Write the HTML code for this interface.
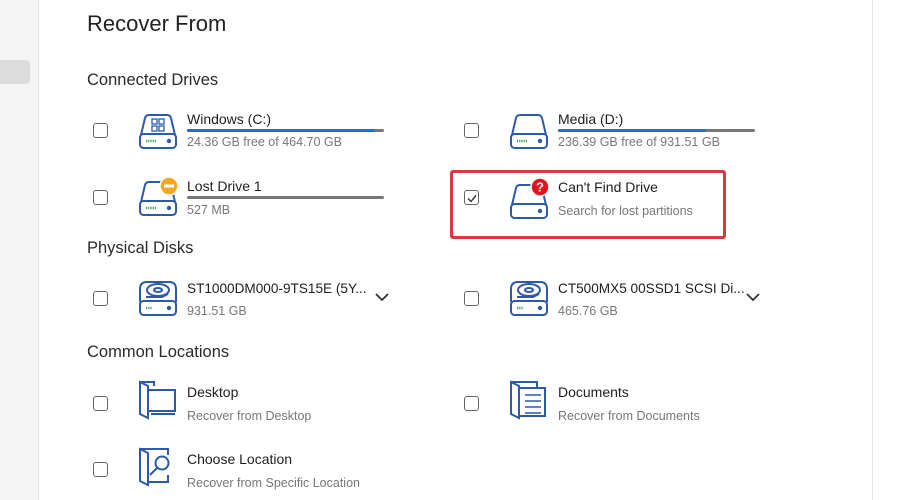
<!DOCTYPE html>
<html><head><meta charset="utf-8"><style>
body{margin:0;width:900px;height:500px;background:#fff;font-family:"Liberation Sans",Arial,sans-serif;position:relative;overflow:hidden;color:#222}
.a{position:absolute;white-space:nowrap}
.side{left:0;top:0;width:38px;height:500px;background:#f5f5f5;border-right:1px solid #e3e3e3}
.pill{left:0;top:60px;width:30px;height:24px;background:#dcdcdc;border-radius:0 4px 4px 0}
.rline{left:872px;top:0;width:1px;height:500px;background:#e6e6e6}
.h1{font-size:22px;color:#222}
.h2{font-size:16.5px;color:#2a2a2a}
.cb{width:13px;height:13px;border:1.5px solid #666;border-radius:3px}
.t{font-size:14px;color:#1e1e1e}
.s{font-size:12.5px;color:#777}
.bar{height:3px;background:#777;border-radius:2px}
.bar i{display:block;height:3px;background:#1f6fd1;border-radius:2px}
svg{position:absolute}
</style></head><body>
<div class="a side"></div><div class="a pill"></div><div class="a rline"></div>
<div class="a h1" style="left:87px;top:11px">Recover From</div>
<div class="a h2" style="left:87px;top:71px">Connected Drives</div>
<div class="a h2" style="left:87px;top:239px">Physical Disks</div>
<div class="a h2" style="left:87px;top:343px">Common Locations</div>

<!-- Windows -->
<div class="a cb" style="left:93px;top:123px"></div>
<svg style="left:138px;top:113px" width="40" height="38" viewBox="0 0 40 38" fill="none" stroke="#2c5aa8" stroke-width="2"><path d="M3 22 L7 5 Q8 2 11 2 H29 Q32 2 33 5 L37 22"/><rect x="2" y="21" width="36" height="14" rx="3.5"/><path d="M8 28h10" stroke="#3aa64a" stroke-width="2.5" stroke-dasharray="1.2 1"/><circle cx="31" cy="28" r="1.2" fill="#2c5aa8"/><rect x="14" y="6" width="5" height="5" stroke-width="1.3"/><rect x="21" y="6" width="5" height="5" stroke-width="1.3"/><rect x="14" y="13" width="5" height="5" stroke-width="1.3"/><rect x="21" y="13" width="5" height="5" stroke-width="1.3"/></svg>
<div class="a t" style="left:187px;top:111px">Windows (C:)</div>
<div class="a bar" style="left:187px;top:129px;width:197px"><i style="width:188px"></i></div>
<div class="a s" style="left:187px;top:135px">24.36 GB free of 464.70 GB</div>

<!-- Lost drive -->
<div class="a cb" style="left:93px;top:190px"></div>
<svg style="left:138px;top:180px" width="40" height="38" viewBox="0 0 40 38" fill="none" stroke="#2c5aa8" stroke-width="2"><path d="M3 22 L7 5 Q8 2 11 2 H29 Q32 2 33 5 L37 22"/><rect x="2" y="21" width="36" height="14" rx="3.5"/><path d="M8 28h10" stroke="#3aa64a" stroke-width="2.5" stroke-dasharray="1.2 1"/><circle cx="31" cy="28" r="1.2" fill="#2c5aa8"/></svg>
<svg style="left:159px;top:176px" width="20" height="20"><circle cx="10" cy="10" r="9" fill="#f5a623" stroke="#fff" stroke-width="1.5"/><rect x="5" y="8.5" width="10" height="3" fill="#fff"/></svg>
<div class="a t" style="left:187px;top:178px">Lost Drive 1</div>
<div class="a bar" style="left:187px;top:196px;width:197px"></div>
<div class="a s" style="left:187px;top:203px">527 MB</div>

<!-- Media -->
<div class="a cb" style="left:464px;top:123px"></div>
<svg style="left:509px;top:113px" width="40" height="38" viewBox="0 0 40 38" fill="none" stroke="#2c5aa8" stroke-width="2"><path d="M3 22 L7 5 Q8 2 11 2 H29 Q32 2 33 5 L37 22"/><rect x="2" y="21" width="36" height="14" rx="3.5"/><path d="M8 28h10" stroke="#3aa64a" stroke-width="2.5" stroke-dasharray="1.2 1"/><circle cx="31" cy="28" r="1.2" fill="#2c5aa8"/></svg>
<div class="a t" style="left:558px;top:111px">Media (D:)</div>
<div class="a bar" style="left:558px;top:129px;width:197px"><i style="width:148px"></i></div>
<div class="a s" style="left:558px;top:135px">236.39 GB free of 931.51 GB</div>

<!-- Can't find -->
<div class="a" style="left:450px;top:170px;width:270px;height:63px;border:3px solid #d9393e;border-radius:3px"></div>
<div class="a cb" style="left:464px;top:190px"></div>
<svg style="left:464px;top:190px" width="16" height="16"><path d="M4 8.5l3 3 5-6" fill="none" stroke="#333" stroke-width="1.4"/></svg>
<svg style="left:509px;top:183px" width="40" height="38" viewBox="0 0 40 38" fill="none" stroke="#2c5aa8" stroke-width="2"><path d="M3 22 L7 5 Q8 2 11 2 H29 Q32 2 33 5 L37 22"/><rect x="2" y="21" width="36" height="14" rx="3.5"/><circle cx="31" cy="28" r="1.2" fill="#2c5aa8"/></svg>
<svg style="left:530px;top:177px" width="20" height="20"><circle cx="10" cy="10" r="9" fill="#e0141e" stroke="#fff" stroke-width="1.5"/><text x="10" y="14.5" font-size="13" font-weight="bold" fill="#fff" text-anchor="middle" font-family="Liberation Sans">?</text></svg>
<div class="a t" style="left:558px;top:179px">Can't Find Drive</div>
<div class="a s" style="left:558px;top:204px">Search for lost partitions</div>

<!-- Physical -->
<div class="a cb" style="left:93px;top:291px"></div>
<svg style="left:138px;top:280px" width="40" height="38" viewBox="0 0 40 38" fill="none" stroke="#2c5aa8" stroke-width="2"><path d="M2 22 V9 Q2 2 9 2 H31 Q38 2 38 9 V22"/><rect x="2" y="21" width="36" height="14" rx="3.5"/><ellipse cx="20" cy="10" rx="11" ry="6"/><ellipse cx="20" cy="10" rx="4" ry="2"/><path d="M8 17 L24 17 L30 14"/><path d="M8 28h6" stroke="#3aa64a" stroke-width="2.5" stroke-dasharray="1.2 1"/><circle cx="31" cy="28" r="1.2" fill="#2c5aa8"/></svg>
<div class="a t" style="left:187px;top:281px;font-size:13.6px">ST1000DM000-9TS15E (5Y...</div>
<div class="a s" style="left:187px;top:304px">931.51 GB</div>
<svg style="left:375px;top:292px" width="14" height="10"><path d="M1 2l6 6 6-6" fill="none" stroke="#333" stroke-width="1.8"/></svg>

<div class="a cb" style="left:464px;top:291px"></div>
<svg style="left:509px;top:280px" width="40" height="38" viewBox="0 0 40 38" fill="none" stroke="#2c5aa8" stroke-width="2"><path d="M2 22 V9 Q2 2 9 2 H31 Q38 2 38 9 V22"/><rect x="2" y="21" width="36" height="14" rx="3.5"/><ellipse cx="20" cy="10" rx="11" ry="6"/><ellipse cx="20" cy="10" rx="4" ry="2"/><path d="M8 17 L24 17 L30 14"/><path d="M8 28h6" stroke="#3aa64a" stroke-width="2.5" stroke-dasharray="1.2 1"/><circle cx="31" cy="28" r="1.2" fill="#2c5aa8"/></svg>
<div class="a t" style="left:558px;top:281px;font-size:13.6px">CT500MX5 00SSD1 SCSI Di...</div>
<div class="a s" style="left:558px;top:304px">465.76 GB</div>
<svg style="left:746px;top:292px" width="14" height="10"><path d="M1 2l6 6 6-6" fill="none" stroke="#333" stroke-width="1.8"/></svg>

<!-- Desktop -->
<div class="a cb" style="left:93px;top:396px"></div>
<svg style="left:138px;top:380px" width="38" height="40" viewBox="0 0 38 40" fill="none" stroke="#2c5aa8" stroke-width="2"><path d="M2 2 L10 6 V38 L2 34 Z"/><path d="M2 2 H16 V6"/><path d="M10 10 H37 V31 H10"/><path d="M13 34 H37"/></svg>
<div class="a t" style="left:187px;top:384px">Desktop</div>
<div class="a s" style="left:187px;top:409px">Recover from Desktop</div>

<div class="a cb" style="left:464px;top:396px"></div>
<svg style="left:509px;top:380px" width="38" height="40" viewBox="0 0 38 40" fill="none" stroke="#2c5aa8" stroke-width="2"><path d="M2 2 L10 6 V38 L2 34 Z"/><path d="M2 2 H28 V8"/><path d="M10 8 H36 V36 H10"/><path d="M16 15h16M16 21h16M16 27h16M16 33h16" stroke-width="1.6"/></svg>
<div class="a t" style="left:558px;top:384px">Documents</div>
<div class="a s" style="left:558px;top:409px">Recover from Documents</div>

<!-- Choose -->
<div class="a cb" style="left:93px;top:462px"></div>
<svg style="left:138px;top:447px" width="38" height="40" viewBox="0 0 38 40" fill="none" stroke="#2c5aa8" stroke-width="2"><path d="M2 2 L10 6 V38 L2 34 Z"/><path d="M2 2 H30 V8"/><path d="M10 35 H30 V28"/><circle cx="24" cy="16" r="6.5"/><path d="M19 21 L12 28"/></svg>
<div class="a t" style="left:187px;top:451px">Choose Location</div>
<div class="a s" style="left:187px;top:476px">Recover from Specific Location</div>
</body></html>
